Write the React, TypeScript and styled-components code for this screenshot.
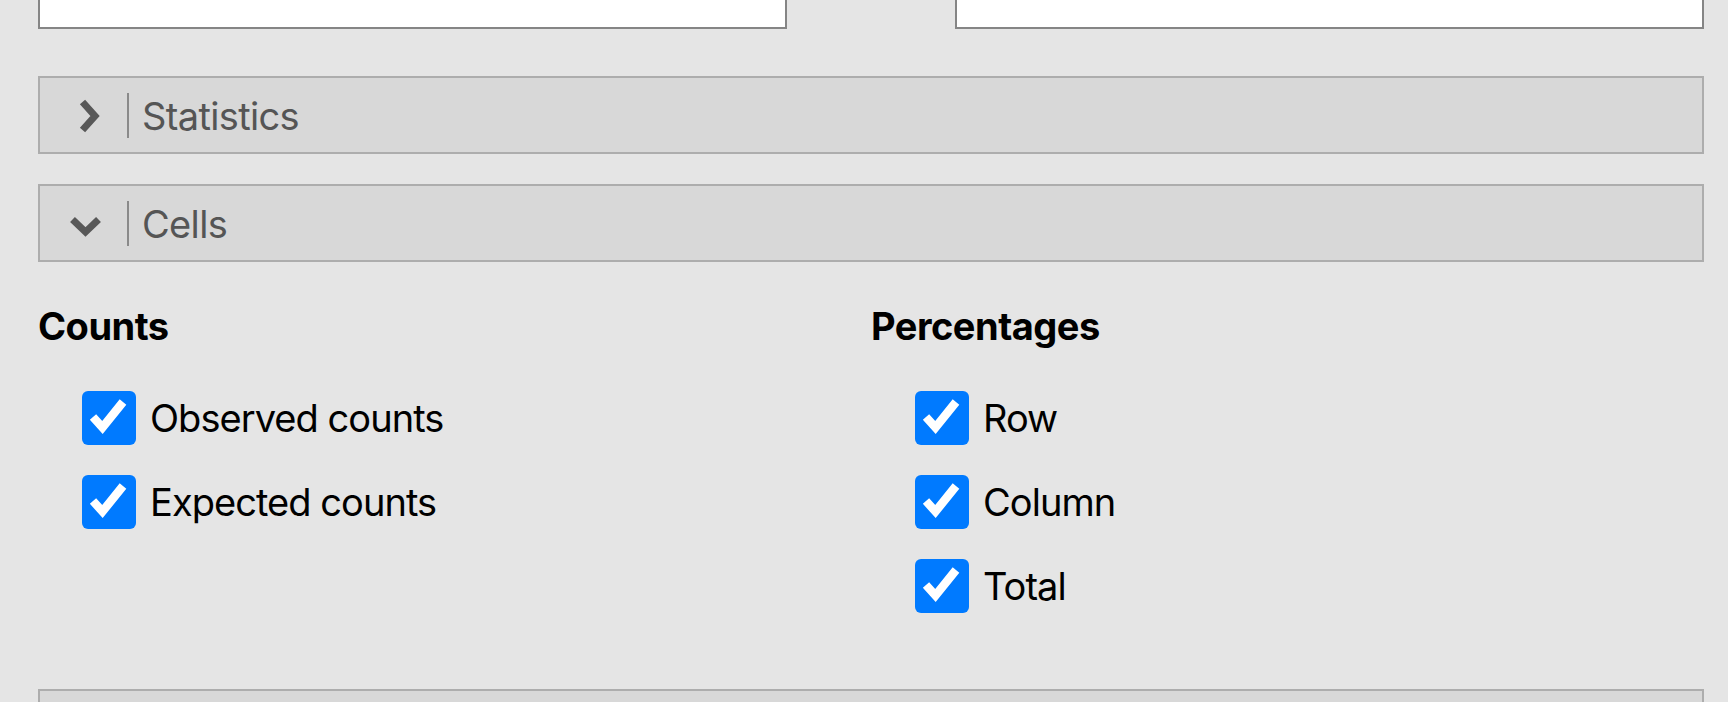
import React from 'react';
import styled, { createGlobalStyle } from 'styled-components';

const GlobalStyle = createGlobalStyle`
  html, body {
    margin: 0;
    padding: 0;
    background: #e5e5e5;
    overflow: hidden;
  }
  body {
    font-family: Inter, "Noto Sans", "Liberation Sans", sans-serif;
  }
`;

const Page = styled.div`
  box-sizing: border-box;
  height: 702px;
  overflow: hidden;
  padding: 0 24px 0 38px;
`;

const InputRow = styled.div`
  display: grid;
  grid-template-columns: 1fr 1fr;
  column-gap: 168px;
  margin-bottom: 47px;
`;

const InputBox = styled.div`
  height: 27px;
  background: #ffffff;
  border: 2px solid #858585;
  border-top: none;
`;

const Section = styled.section`
  margin-bottom: 30px;
`;

const PanelHeader = styled.div`
  box-sizing: border-box;
  height: 78px;
  display: flex;
  align-items: center;
  background: #d8d8d8;
  border: 2px solid #adadad;
`;

const IconSlot = styled.div<{ $open: boolean }>`
  width: 87px;
  height: 100%;
  display: flex;
  align-items: center;
  padding-left: ${(p) => (p.$open ? '28px' : '38px')};
  padding-top: ${(p) => (p.$open ? '8px' : '1px')};
  box-sizing: border-box;
  color: #585858;
`;

const Divider = styled.div`
  width: 2px;
  height: 45px;
  background: #8a8a8a;
  margin-right: 13px;
`;

const PanelTitle = styled.span`
  padding-top: 2px;
  font-size: 38px;
  line-height: 46px;
  letter-spacing: -0.65px;
  color: #555555;
`;

const PanelBody = styled.div`
  display: grid;
  grid-template-columns: 1fr 1fr;
  padding: 41px 0 46px;
`;

const Column = styled.div`
  display: flex;
  flex-direction: column;
`;

const Heading = styled.h3`
  margin: 0;
  font-size: 38px;
  line-height: 46px;
  font-weight: 700;
  letter-spacing: -0.5px;
  color: #000;
`;

const OptionList = styled.div`
  display: flex;
  flex-direction: column;
  gap: 30px;
  margin-top: 42px;
  padding-left: 44px;
`;

const OptionRow = styled.label`
  display: flex;
  align-items: center;
  height: 54px;
`;

const CheckBox = styled.span`
  width: 54px;
  height: 54px;
  flex: none;
  border-radius: 6px;
  background: #007aff;
  display: flex;
  align-items: center;
  justify-content: center;
`;

const OptionText = styled.span`
  margin-left: 14px;
  font-size: 38px;
  line-height: 46px;
  letter-spacing: -0.95px;
  color: #000;
`;

const Chevron = ({ open }: { open: boolean }) =>
  open ? (
    <svg width="35" height="22" viewBox="0 0 35 22">
      <polyline points="4.5,3.5 17.5,16 30.5,3.5" fill="none" stroke="currentColor" strokeWidth="7" />
    </svg>
  ) : (
    <svg width="24" height="36" viewBox="0 0 24 36">
      <polyline points="4.5,4 17,18 4.5,32" fill="none" stroke="currentColor" strokeWidth="7" />
    </svg>
  );

const Tick = () => (
  <svg width="54" height="54" viewBox="0 0 54 54">
    <polyline points="11,26 20.5,36.5 41,11" fill="none" stroke="#fff" strokeWidth="8.5" />
  </svg>
);

const Option = ({ label }: { label: string }) => (
  <OptionRow>
    <CheckBox>
      <Tick />
    </CheckBox>
    <OptionText>{label}</OptionText>
  </OptionRow>
);

const Panel = ({ title, open, children }: { title?: string; open: boolean; children?: React.ReactNode }) => (
  <Section>
    <PanelHeader>
      <IconSlot $open={open}>
        <Chevron open={open} />
      </IconSlot>
      <Divider />
      {title && <PanelTitle>{title}</PanelTitle>}
    </PanelHeader>
    {children}
  </Section>
);

const App = () => {
  return (
    <Page>
      <GlobalStyle />
      <InputRow>
        <InputBox />
        <InputBox />
      </InputRow>

      <Panel title="Statistics" open={false} />

      <Panel title="Cells" open>
        <PanelBody>
          <Column>
            <Heading>Counts</Heading>
            <OptionList>
              <Option label="Observed counts" />
              <Option label="Expected counts" />
            </OptionList>
          </Column>
          <Column>
            <Heading>Percentages</Heading>
            <OptionList>
              <Option label="Row" />
              <Option label="Column" />
              <Option label="Total" />
            </OptionList>
          </Column>
        </PanelBody>
      </Panel>

      <Panel open={false} />
    </Page>
  );
};

export default App;
